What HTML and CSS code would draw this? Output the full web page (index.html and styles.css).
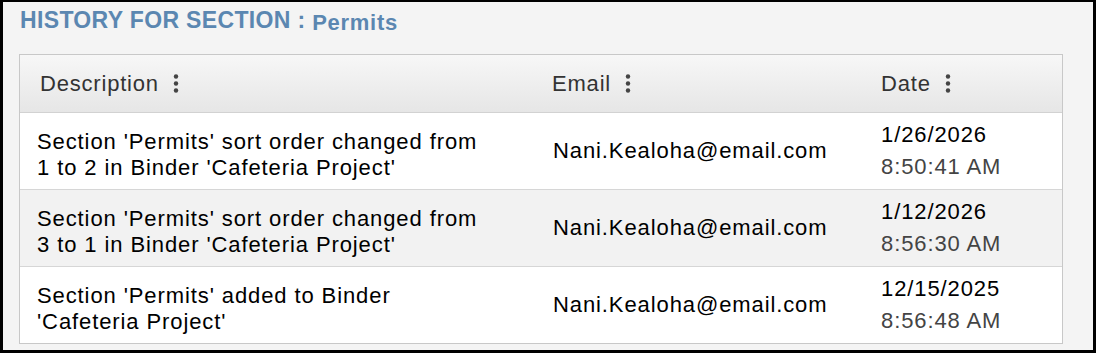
FILE: index.html
```html
<!DOCTYPE html>
<html lang="en">
<head>
    <meta charset="UTF-8">
    <title>Section History</title>
    <link rel="stylesheet" href="styles.css">
</head>
<body>
<div class="frame">
    <h2 class="title">HISTORY FOR SECTION : <span class="section-name">Permits</span></h2>

    <div class="grid">
        <div class="grid-head">
            <div class="head-cell">Description <span class="kebab"><svg width="6" height="19" viewBox="0 0 6 19"><circle cx="3" cy="2.5" r="2.2"/><circle cx="3" cy="9.5" r="2.2"/><circle cx="3" cy="16.5" r="2.2"/></svg></span></div>
            <div class="head-cell">Email <span class="kebab"><svg width="6" height="19" viewBox="0 0 6 19"><circle cx="3" cy="2.5" r="2.2"/><circle cx="3" cy="9.5" r="2.2"/><circle cx="3" cy="16.5" r="2.2"/></svg></span></div>
            <div class="head-cell">Date <span class="kebab"><svg width="6" height="19" viewBox="0 0 6 19"><circle cx="3" cy="2.5" r="2.2"/><circle cx="3" cy="9.5" r="2.2"/><circle cx="3" cy="16.5" r="2.2"/></svg></span></div>
        </div>

        <div class="grid-row">
            <div class="cell desc"><span class="desc-text">Section 'Permits' sort order changed from 1 to 2 in Binder 'Cafeteria Project'</span></div>
            <div class="cell email">Nani.Kealoha@email.com</div>
            <div class="cell date">1/26/2026<span class="time">8:50:41 AM</span></div>
        </div>
        <div class="grid-row alt">
            <div class="cell desc"><span class="desc-text">Section 'Permits' sort order changed from 3 to 1 in Binder 'Cafeteria Project'</span></div>
            <div class="cell email">Nani.Kealoha@email.com</div>
            <div class="cell date">1/12/2026<span class="time">8:56:30 AM</span></div>
        </div>
        <div class="grid-row">
            <div class="cell desc"><span class="desc-text">Section 'Permits' added to Binder 'Cafeteria Project'</span></div>
            <div class="cell email">Nani.Kealoha@email.com</div>
            <div class="cell date">12/15/2025<span class="time">8:56:48 AM</span></div>
        </div>
    </div>
</div>
</body>
</html>
```

FILE: styles.css
```css
html, body {
    margin: 0;
    padding: 0;
}
body {
    font-family: "Liberation Sans", Arial, sans-serif;
    color: #000;
}
.frame {
    box-sizing: border-box;
    width: 1096px;
    height: 353px;
    background: #f4f4f4;
    border: 3px solid #000;
    border-top-width: 2px;
    padding: 0 30px 0 16px;
}
.title {
    margin: 5px 0 0 1px;
    font-size: 23px;
    line-height: 26px;
    letter-spacing: 0.35px;
    font-weight: bold;
    color: #5b87b1;
}
.section-name {
    font-size: 22px;
    letter-spacing: 0.7px;
    position: relative;
    top: 2px;
}
.grid {
    margin-top: 20px;
    background: white;
    border: 1px solid #c8c8c8;
}
.grid-head, .grid-row {
    display: grid;
    grid-template-columns: 512px 329px 1fr;
}
.grid-head {
    height: 57px;
    background: linear-gradient(to bottom, #f7f7f7, #e6e6e6);
    border-bottom: 1px solid #d2d2d2;
}
.head-cell {
    display: flex;
    align-items: center;
    padding-left: 20px;
    font-size: 22px;
    letter-spacing: 0.8px;
    color: #333;
}
.kebab {
    display: flex;
    margin-left: 14px;
    fill: #444;
}
.grid-row {
    height: 76px;
    border-bottom: 1px solid #d6d6d6;
    font-size: 22px;
    letter-spacing: 0.9px;
}
.grid-row:last-child {
    border-bottom: none;
}
.grid-row.alt {
    background: #f2f2f2;
}
.cell {
    display: flex;
    align-items: center;
    padding-left: 20px;
}
.cell.desc {
    padding-left: 17px;
    padding-top: 8px;
    line-height: 26px;
}
.desc-text {
    width: 450px;
}
.cell.email {
    padding-left: 21px;
}
.cell.date {
    flex-direction: column;
    align-items: flex-start;
    justify-content: center;
    line-height: 32px;
}
.time {
    color: #444;
}
```
